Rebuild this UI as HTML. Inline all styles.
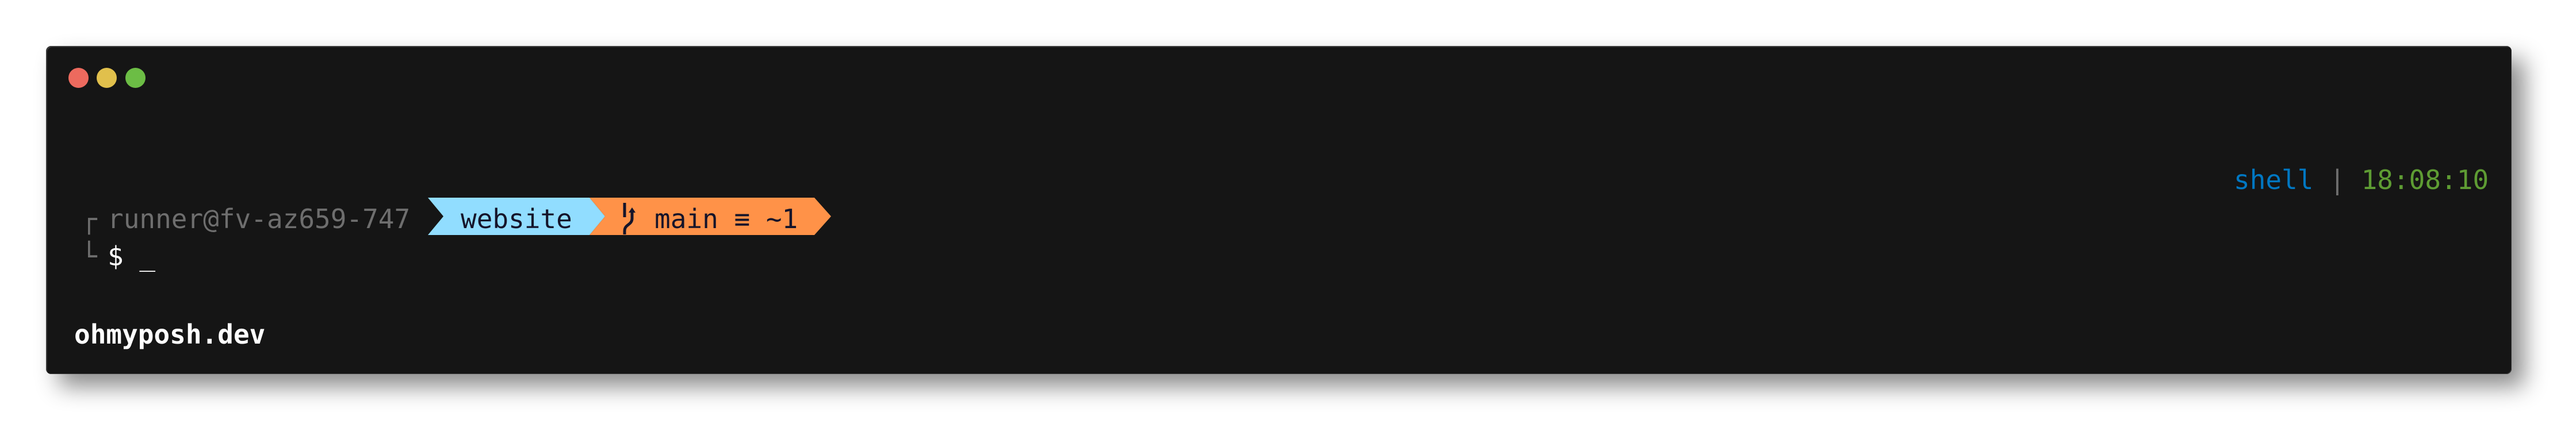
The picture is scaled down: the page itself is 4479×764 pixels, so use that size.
<!DOCTYPE html>
<html><head><meta charset="utf-8"><style>
html,body{margin:0;padding:0;background:#fff;width:4479px;height:764px;overflow:hidden;position:relative}
.win{position:absolute;left:80px;top:80px;width:4287px;height:571px;background:#151515;border-radius:9px;box-shadow:2px 2px 0 #3a3a3a inset,-1px -1px 0 #3a3a3a inset,22px 22px 40px rgba(0,0,0,0.45)}
.dot{position:absolute;top:118px;width:35px;height:35px;border-radius:50%}
.t{position:absolute;font-family:"DejaVu Sans Mono","Liberation Mono",monospace;font-size:46px;line-height:46px;white-space:pre}
</style></head><body>
<div class="win"></div>
<div class="dot" style="left:119px;background:#ed6a5e"></div>
<div class="dot" style="left:168px;background:#e1c04c"></div>
<div class="dot" style="left:218px;background:#6cbd45"></div>
<svg style="position:absolute;left:0;top:0" width="4479" height="764">
<polygon points="744,344 1025,344 1052,376.5 1025,409 744,409 771,376.5" fill="#91ddff"/>
<polygon points="1025,344 1416,344 1445,376.5 1416,409 1025,409 1052,376.5" fill="#ff9248"/>
<g stroke="#15142a" stroke-width="5" fill="none">
<path d="M1086 353 V378"/>
<path d="M1099 368 V380 C1099 392 1086 390 1086 402 V408"/>
</g>
<polygon points="1093,370 1105,370 1099,361" fill="#15142a"/>
</svg>
<div class="t" style="left:141px;top:358px;color:#6e6e6e">┌</div>
<div class="t" style="left:187px;top:358px;color:#6e6e6e">runner@fv-az659-747</div>
<div class="t" style="left:801px;top:358px;color:#15142a">website</div>
<div class="t" style="left:1138px;top:358px;color:#15142a">main ≡ ~1</div>
<div class="t" style="left:141px;top:423px;color:#6e6e6e">└</div>
<div class="t" style="left:187px;top:423px;color:#ffffff">$ _</div>
<div class="t" style="left:129px;top:559px;color:#ffffff;font-weight:bold">ohmyposh.dev</div>
<div class="t" style="left:3884px;top:290px;color:#0077c2">shell <span style="color:#6e6e6e">|</span> <span style="color:#5e9c33">18:08:10</span></div>
</body></html>
